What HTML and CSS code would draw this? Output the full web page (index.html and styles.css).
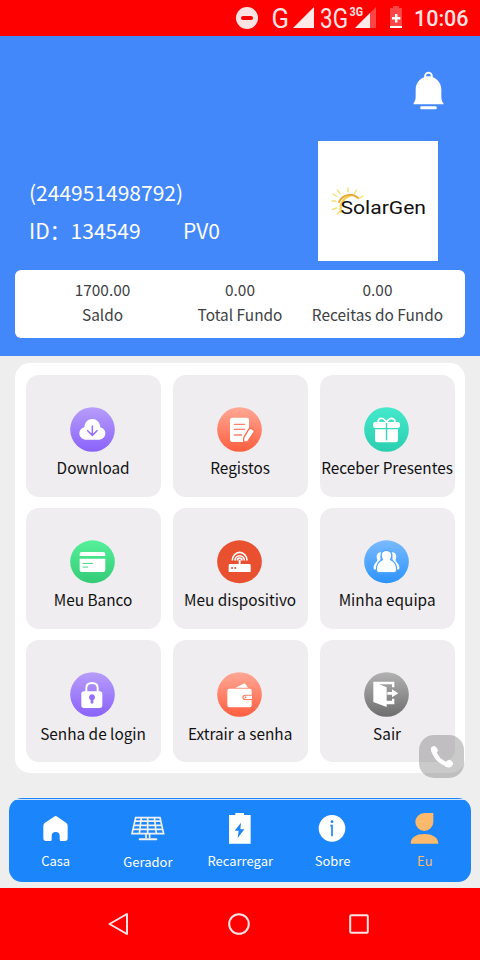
FILE: index.html
```html
<!DOCTYPE html>
<html lang="pt">
<head>
<meta charset="utf-8">
<title>SolarGen</title>
<link rel="stylesheet" href="styles.css">
</head>
<body>
<div class="screen">
  <div class="status">
    <svg class="status-icons" viewBox="0 0 178 36" width="178" height="36">
      <circle cx="11" cy="18" r="11" fill="#ffe3e3"/>
      <rect x="5" y="16" width="12" height="4" rx="2" fill="red"/>
      <text x="35.500" y="27.500" class="sig" textLength="17.500" lengthAdjust="spacingAndGlyphs">G</text>
      <path d="M57 28 78 7v21z" fill="#ffeaea"/>
      <text x="84" y="27.500" class="sig" textLength="28" lengthAdjust="spacingAndGlyphs">3G</text>
      <path d="M119 28 140 7v21z" fill="#ff4545"/>
      <path d="M119 28 134 13v15z" fill="#ffeaea"/>
      <text x="113.500" y="16" class="sig-small" textLength="13.500" lengthAdjust="spacingAndGlyphs">3G</text>
      <path d="M157 6h6v2h3v18h-12V8h3z" fill="#ff4545"/>
      <path d="M154 26h12v2h-12zM159 14h2.400v3h3v2.400h-3v3H159v-3h-3V17h3z" fill="#fff"/>
    </svg>
    <span class="clock">10:06</span>
  </div>

  <header class="header">
    <svg class="bell" viewBox="0 0 93 117" width="31" height="39">
      <circle cx="46.500" cy="15" r="10" fill="none" stroke="#fff" stroke-width="6"/>
      <path d="M46.500 14C24 18 8 33 8 56v22C8 88 4 94 1 98v2h91v-2c-3-4-7-10-7-21V56C85 33 69 18 46.500 14z" fill="#fff"/>
      <path d="M40 16q6-8 13 0z" fill="#4388fb"/>
      <rect x="22" y="106" width="49" height="9" rx="3" fill="#fff"/>
    </svg>
    <div class="profile">
      <div class="who">
        <div class="phone">(244951498792)</div>
        <div class="ident"><span class="id">ID：134549</span><span class="level">PV0</span></div>
      </div>
      <div class="avatar">
        <svg viewBox="0 0 120 120" width="120" height="120">
          <g fill="none" stroke-linecap="round">
            <path d="M23 71A13.500 13.500 0 0 1 33 54.500" stroke="#f6d44e" stroke-width="2.200"/>
            <path d="M21 61A12 12 0 0 1 40 57" stroke="#eba93c" stroke-width="2"/>
            <path d="M14 60h4M14.500 68.500l4-1.500M19.500 73l2-2.500M15 53l4 2.500M19.500 49l2.500 3.500M30 47v4M38.500 49l-2 3.500M45 55l-3.500 2" stroke="#f8df75" stroke-width="1.400"/>
          </g>
          <text x="22.500" y="72.500" class="brand" textLength="85.500" lengthAdjust="spacingAndGlyphs">SolarGen</text>
        </svg>
      </div>
    </div>
    <div class="stats">
      <div class="stat"><span>1700.00</span><span>Saldo</span></div>
      <div class="stat"><span>0.00</span><span>Total Fundo</span></div>
      <div class="stat"><span>0.00</span><span>Receitas do Fundo</span></div>
    </div>
  </header>

  <main class="menu">
    <div class="tile">
      <svg class="icon" viewBox="0 0 135 135">
        <defs>
          <linearGradient id="purple" x2="0" y2="1"><stop stop-color="#b79dfa"/><stop offset="1" stop-color="#8a62fb"/></linearGradient>
          <linearGradient id="coral" x2="0" y2="1"><stop stop-color="#ffa896"/><stop offset="1" stop-color="#ff5e3e"/></linearGradient>
          <linearGradient id="teal" x2="0" y2="1"><stop stop-color="#44e8ca"/><stop offset="1" stop-color="#2bcfb0"/></linearGradient>
          <linearGradient id="green" x2="0" y2="1"><stop stop-color="#55f09a"/><stop offset="1" stop-color="#35cb76"/></linearGradient>
          <linearGradient id="blue" x2="0" y2="1"><stop stop-color="#7abaff"/><stop offset="1" stop-color="#2c93fd"/></linearGradient>
          <linearGradient id="gray" x2="0" y2="1"><stop stop-color="#b2b2b2"/><stop offset="1" stop-color="#6e6e6e"/></linearGradient>
        </defs>
        <circle cx="67.500" cy="67.500" r="67" fill="url(#purple)"/>
        <path d="M47 98C36 98 28 90 28 79c0-9 6-16 15-18C44 46 54 36 67 36s23 10 24 25c9 2 15 9 15 18 0 11-8 19-19 19z" fill="#fff"/>
        <path d="M67 57v28M53 71l14 14 14-14" fill="none" stroke="#9670fb" stroke-width="4.500" stroke-linecap="round"/>
      </svg>
      <span>Download</span>
    </div>
    <div class="tile">
      <svg class="icon" viewBox="0 0 135 135">
        <circle cx="67.500" cy="67.500" r="67" fill="url(#coral)"/>
        <rect x="39" y="32" width="57" height="73" rx="7" fill="#fff"/>
        <path d="M52 52h31M52 67h31M52 84h22" stroke="#ff806a" stroke-width="4" stroke-linecap="round"/>
        <path d="M95 67q3-5 9-2l5 3q5 3 2 8L94 101q-2 4-6 4h-8v-9q0-4 2-7z" fill="#fff" stroke="#ff6d50" stroke-width="4" stroke-linejoin="round"/>
      </svg>
      <span>Registos</span>
    </div>
    <div class="tile">
      <svg class="icon" viewBox="0 0 135 135">
        <circle cx="67.500" cy="67.500" r="67" fill="url(#teal)"/>
        <rect x="27" y="45" width="81" height="18" rx="7" fill="#fff"/>
        <path d="M33 67h69v32q0 7-7 7H40q-7 0-7-7z" fill="#fff"/>
        <path d="M67 45Q55 29 46 36q-6 5-2 11M67 45Q79 29 89 36q6 5 2 11M67 44l-10 9M67 44l10 9" fill="none" stroke="#fff" stroke-width="5"/>
        <path d="M67.500 48v52" stroke="#30d7b8" stroke-width="4"/>
      </svg>
      <span>Receber Presentes</span>
    </div>
    <div class="tile row2">
      <svg class="icon" viewBox="0 0 135 130">
        <ellipse cx="67.500" cy="65" rx="67" ry="64.500" fill="url(#green)"/>
        <path d="M29 48v-6q0-6 6-6h65q6 0 6 6v6zM29 56h77v34q0 6-6 6H35q-6 0-6-6z" fill="#fff"/>
        <path d="M38 70h31M38 81h16" stroke="#43d985" stroke-width="3"/>
      </svg>
      <span>Meu Banco</span>
    </div>
    <div class="tile row2">
      <svg class="icon" viewBox="0 0 135 130">
        <ellipse cx="67.500" cy="65" rx="67" ry="64.500" fill="#e95030"/>
        <path d="M39 72h26V60h6v12h26q4 0 4 4v20H35V76q0-4 4-4z" fill="#fff"/>
        <g fill="none" stroke="#fff" stroke-width="5"><path d="M61 61a7 7 0 0 1 14 0M54 61a14 14 0 0 1 28 0M46 61a22 24 0 0 1 44 0"/></g>
        <circle cx="45" cy="84" r="3" fill="#e95030"/><circle cx="55" cy="84" r="3" fill="#e95030"/>
      </svg>
      <span>Meu dispositivo</span>
    </div>
    <div class="tile row2">
      <svg class="icon" viewBox="0 0 135 130">
        <ellipse cx="67.500" cy="65" rx="67" ry="64.500" fill="url(#blue)"/>
        <path d="M53 37c-13-3-18 10-13 22 1 7-9 8-11 22-1 6 0 8 6 8l12-20zM82 37c13-3 18 10 13 22-1 7 9 8 11 22 1 6 0 8-6 8L88 69z" fill="#fff"/>
        <path d="M67 31c-16 0-20 15-12 28-13 5-18 14-18 31q0 8 7 8h47q7 0 7-8c0-17-5-26-18-31 8-13 3-28-13-28z" fill="#fff" stroke="#4ea5fe" stroke-width="4"/>
      </svg>
      <span>Minha equipa</span>
    </div>
    <div class="tile row3">
      <svg class="icon" viewBox="0 0 135 135">
        <circle cx="67.500" cy="67.500" r="67" fill="url(#purple)"/>
        <path d="M49 60V48q0-15 17-15t17 15v12" fill="none" stroke="#fff" stroke-width="6"/>
        <rect x="34" y="58" width="63" height="50" rx="8" fill="#fff"/>
        <path d="M62 93V84a9 9 0 1 1 8 0v9q-4 4-8 0z" fill="#9670fb"/>
      </svg>
      <span>Senha de login</span>
    </div>
    <div class="tile row3">
      <svg class="icon" viewBox="0 0 135 135">
        <circle cx="67.500" cy="67.500" r="67" fill="url(#coral)"/>
        <path d="M55 47 80 35q4-2 6 2l7 10z" fill="#fff"/>
        <path d="M37 50h61q6 0 6 6v12H84q-8 0-8 8t8 8h20v16q0 6-6 6H37q-6 0-6-6V56q0-6 6-6z" fill="#fff"/>
        <path d="M105 71H86q-6 0-6 5t6 5h19z" fill="#fff"/>
        <circle cx="86" cy="76" r="2.500" fill="#ff7056"/>
      </svg>
      <span>Extrair a senha</span>
    </div>
    <div class="tile row3">
      <svg class="icon" viewBox="0 0 135 135">
        <circle cx="67.500" cy="67.500" r="67" fill="url(#gray)"/>
        <path d="M28 29h63v17h-7V37H46l22 9v40h16v-6h7v17H68v8L28 90z" fill="#fff"/>
        <path d="M70 60h14v-8l19 12-19 12v-8H70z" fill="#fff"/>
      </svg>
      <span>Sair</span>
    </div>
  </main>

  <nav class="tabs">
    <a class="tab">
      <svg viewBox="0 0 111 111" width="37" height="37"><path d="M51 14q5-4 10 0l27 19q4 3 4 8v38q0 8-8 8H72q-4 0-4-4V72q0-12-12-12T44 72v11q0 4-4 4H27q-8 0-8-8V41q0-5 4-8z" fill="#fff"/></svg>
      <span>Casa</span>
    </a>
    <a class="tab gen">
      <svg viewBox="0 0 111 111" width="37" height="37"><g fill="none" stroke="#f1f1f1"><path d="M20 17h73l11 48H9zM17 27.500h79M14 40h85M11 52h91M37 16l-6 49M56 16v49M76 16l6 49" stroke-width="5"/><path d="M51 66v13M62 66v13" stroke-width="5"/><path d="M32 82h50" stroke-width="6" stroke-linecap="round"/></g></svg>
      <span>Gerador</span>
    </a>
    <a class="tab">
      <svg viewBox="0 0 111 111" width="37" height="37"><path d="M43 3h26v6h20v86H24V9h19z" fill="#fff"/><path d="M60 32 41 56h12l-3 22 20-26H58z" fill="#1b85fb"/></svg>
      <span>Recarregar</span>
    </a>
    <a class="tab">
      <svg viewBox="0 0 111 111" width="37" height="37"><circle cx="54" cy="49" r="40" fill="#fff"/><path d="M49 41h5v32" fill="none" stroke="#1b85fb" stroke-width="5"/><circle cx="54" cy="29" r="4" fill="#1b85fb"/></svg>
      <span>Sobre</span>
    </a>
    <a class="tab active">
      <svg viewBox="0 0 111 111" width="37" height="37"><path d="M55 3h27v27a27 27 0 1 1-27-27zM14 95C14 76 31 66 55 66s42 10 42 29z" fill="#fbb96b"/></svg>
      <span>Eu</span>
    </a>
  </nav>

  <div class="system">
    <svg viewBox="0 0 24 24" width="24" height="24"><path d="M20 2v20L2.500 12z"/></svg>
    <svg viewBox="0 0 24 24" width="24" height="24"><circle cx="12" cy="12" r="9.800"/></svg>
    <svg viewBox="0 0 24 24" width="24" height="24"><rect x="3.200" y="3.200" width="17.600" height="17.600" rx="1"/></svg>
  </div>

  <div class="call">
    <svg viewBox="0 0 135 130" width="45" height="43"><path d="M43 42Q49 79 91 91" fill="none" stroke="#fff" stroke-width="13"/><path d="M36 38q9-11 18 2 7 9-4 16l-8 2q-9-10-6-20zM81 83q5-12 15-6 12 8 2 18-8 6-20 0z" fill="#fff"/></svg>
  </div>
</div>
</body>
</html>
```
FILE: styles.css
```css
* { box-sizing: border-box; }

body {
  margin: 0;
  font-family: "Noto Sans CJK SC", "Noto Sans", sans-serif;
  background: #eee;
}

.screen {
  position: relative;
  display: flex;
  flex-direction: column;
  width: 480px;
  height: 960px;
  overflow: hidden;
  background: #eee;
}

.status {
  display: flex;
  align-items: center;
  height: 36px;
  padding-left: 236px;
  background: red;
}

.status-icons { display: block; flex: none; }

.sig { font: 400 28px Roboto, sans-serif; fill: #ffe3e3; }
.sig-small { font: 700 12px Roboto, sans-serif; fill: #ffe3e3; }

.clock {
  font: 500 21.5px/36px Roboto, sans-serif;
  color: #ffe3e3;
  padding-top: 2px;
}

.header {
  display: flex;
  flex-direction: column;
  flex: none;
  height: 319.5px;
  padding: 35px 15px 0;
  background: #4388fb;
}

.bell { align-self: flex-end; margin-right: 21px; }

.profile {
  display: flex;
  justify-content: space-between;
  margin-top: 31px;
  padding: 0 27px 0 14px;
}

.who {
  padding-top: 32px;
  font-size: 21px;
  line-height: 38px;
  color: #fff;
}

.phone { white-space: nowrap; }
.ident { display: flex; white-space: nowrap; }
.id { width: 154px; }

.avatar { width: 120px; height: 120px; background: #fff; }
.avatar svg { display: block; }
.brand { font-family: Roboto, sans-serif; font-size: 18.5px; font-weight: 400; fill: #111; }

.stats {
  display: grid;
  grid-template-columns: repeat(3, 137.5px);
  justify-content: center;
  height: 67.5px;
  margin-top: 9px;
  padding-top: 7px;
  border-radius: 6px;
  background: #fff;
  color: #3d4144;
  font-size: 15.4px;
  line-height: 25px;
}

.stat {
  display: flex;
  flex-direction: column;
  align-items: center;
  white-space: nowrap;
}

.menu {
  display: grid;
  grid-template-columns: repeat(3, 135px);
  grid-auto-rows: 121.5px;
  column-gap: 12px;
  row-gap: 11px;
  flex: none;
  height: 409.5px;
  margin: 7.5px 15px 0;
  padding: 12px 10.6px 0;
  border-radius: 15px;
  background: #fff;
}

.tile {
  display: flex;
  flex-direction: column;
  align-items: center;
  padding-top: 31.6px;
  border-radius: 13px;
  background: #efedf0;
  font-size: 15.35px;
  line-height: 24px;
  color: #111;
  white-space: nowrap;
}

.icon { width: 45px; height: 45px; margin: 0 1.4px 3.8px 0; }
.row2 { padding-top: 32.6px; }
.row2 .icon { height: 43.5px; }
.row3 { padding-top: 32px; }
.row3 .icon { margin: 0 .6px 4px 0; }

.tabs {
  display: grid;
  grid-template-columns: repeat(5, 92.3px);
  flex: none;
  height: 83.5px;
  margin: 25.5px 9px 0;
  padding-top: 14px;
  border-radius: 13px;
  background: linear-gradient(#1b85fb 1px, #cfe4fb 1px, #cfe4fb 2px, #1b85fb 2px);
}

.tab {
  display: flex;
  flex-direction: column;
  align-items: center;
  font-size: 13px;
  line-height: 20px;
  color: #fff;
}

.tab span { margin: 2px 0 0 1px; }
.gen span { margin-top: 3px; }
.active { color: #fbb96b; }

.system {
  display: flex;
  justify-content: center;
  align-items: center;
  gap: 96px;
  flex: none;
  height: 72px;
  margin-top: auto;
  padding-right: 2px;
  background: red;
}

.system svg { fill: none; stroke: #ffe3e3; stroke-width: 2; stroke-linejoin: round; }

.call {
  position: absolute;
  left: 418.6px;
  top: 735px;
  width: 45px;
  height: 43.4px;
  border-radius: 15px;
  background: rgba(110, 110, 110, .37);
}
```
